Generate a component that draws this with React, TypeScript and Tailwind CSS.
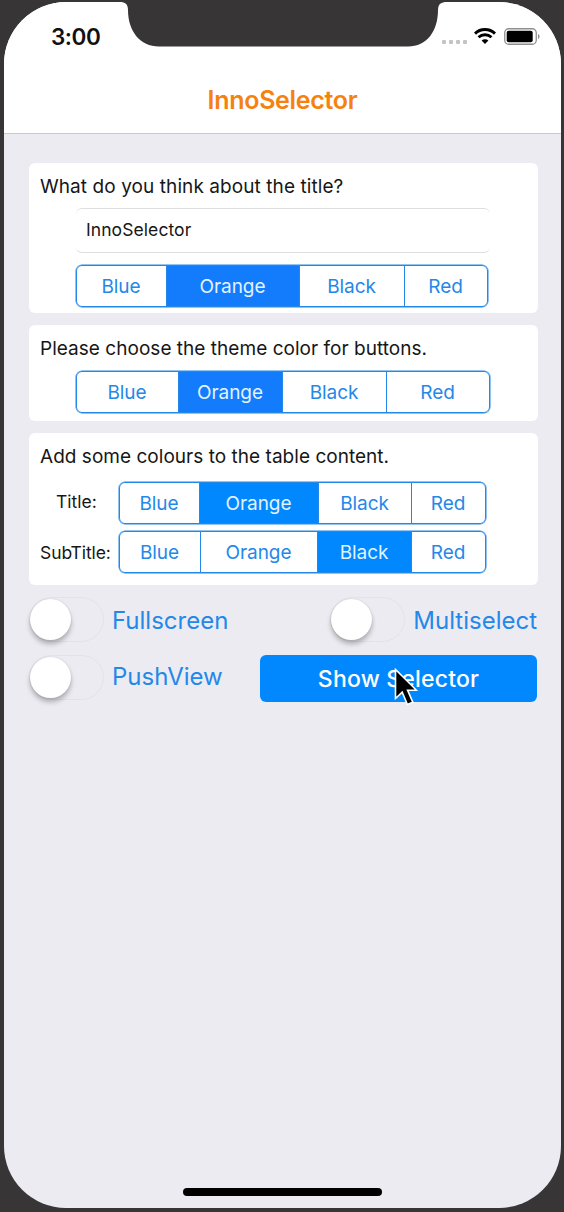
import { clsx } from "clsx";

type Segment = { label: string; width: string; selected?: boolean };

function SegmentedControl({ segments, fill, className }: { segments: Segment[]; fill: string; className: string }) {
  return (
    <div className={clsx("flex overflow-hidden rounded-[6px] border border-[#2488e8] shadow-[0_0_0_0.5px_#2488e8]", className)}>
      {segments.map((s, i) => (
        <button
          key={s.label}
          className={clsx(
            "flex h-full shrink-0 items-center justify-center pt-px pr-px text-[19px] leading-none tracking-[-0.05px]",
            s.width,
            i > 0 && "border-l border-[#2488e8]",
            s.selected ? clsx(fill, "text-[#e2f3ff]") : "text-[#2488e8]",
          )}
        >
          {s.label}
        </button>
      ))}
    </div>
  );
}

function Toggle() {
  return (
    <button className="flex h-[45px] w-[75px] shrink-0 items-start rounded-full border border-[#e3e3e7] pt-px">
      <span className="size-[41px] rounded-full bg-white shadow-[0_4px_5px_rgba(0,0,0,0.26),0_0_2px_rgba(0,0,0,0.12)]" />
    </button>
  );
}

function StatusBar() {
  return (
    <div className="flex h-[72px] items-start justify-between pt-[22px] pr-[21px] pl-[47px]">
      <span className="text-[22.5px] leading-[26px] font-semibold tracking-[-0.45px] text-[#111]">3:00</span>
      <div className="flex h-[24px] items-center">
        <div className="mt-[12px] mr-[7px] flex gap-[2.5px]">
          <i className="size-[4.5px] rounded-[1px] bg-[#c4c4c4]" />
          <i className="size-[4.5px] rounded-[1px] bg-[#c4c4c4]" />
          <i className="size-[4.5px] rounded-[1px] bg-[#c4c4c4]" />
          <i className="size-[4.5px] rounded-[1px] bg-[#c4c4c4]" />
        </div>
        <svg className="h-[16px] w-[22px]" viewBox="0 0 22 16" fill="none">
          <path d="M1 5.600C6.500.2 15.500.2 21 5.600" stroke="#000" strokeWidth="3" />
          <path d="M4.500 9.300C8.200 5.900 13.800 5.900 17.500 9.300" stroke="#000" strokeWidth="2.800" />
          <path d="M11 15.900L7.600 12.500C9.500 10.900 12.500 10.900 14.400 12.500Z" fill="#000" />
        </svg>
        <svg className="ml-[8px] h-[17px] w-[36px]" viewBox="0 0 36 17">
          <rect x=".75" y=".75" width="31.500" height="15.500" rx="4" fill="white" stroke="#8e8e8e" strokeWidth="1.300" />
          <rect x="2.700" y="2.700" width="26" height="11.600" rx="2" fill="#000" />
          <path d="M34 6c2 .7 2 4.300 0 5Z" fill="#8e8e8e" />
        </svg>
      </div>
    </div>
  );
}

const heading = "h-[24px] pl-[11px] text-[19px] leading-[24px] whitespace-nowrap text-[#161616]";

export default function App() {
  return (
    <div className="relative h-[1212px] w-[564px] overflow-hidden bg-[#373535] pt-[2px] pl-[4px] font-['Inter',sans-serif]">
      <div className="flex h-[1206px] w-[557px] flex-col overflow-hidden rounded-[62px] bg-[#ecebf2]">
        <header className="h-[132px] shrink-0 border-b border-[#c9c9cc] bg-white">
          <StatusBar />
          <h1 className="pt-[10px] text-center text-[25px] leading-[32px] font-semibold tracking-[-0.3px] text-[#f5820f]">
            InnoSelector
          </h1>
        </header>

        <main className="flex flex-1 flex-col pt-[29px] pr-[24px] pl-[25px]">
          <section className="h-[150px] w-[509px] rounded-[6px] bg-white pt-[12px]">
            <h2 className={clsx(heading, "tracking-[0.08px]")}>What do you think about the title?</h2>
            <input
              readOnly
              value="InnoSelector"
              className="mt-[9px] ml-[47px] block h-[45px] w-[414px] rounded-[6px] border-y border-[#dedede] px-[10px] pb-[3px] text-[17.5px] tracking-[0.08px] text-[#161616] outline-none"
            />
            <SegmentedControl
              className="mt-[12px] ml-[47px] h-[42px] w-[412px]"
              fill="bg-[#127cfd]"
              segments={[
                { label: "Blue", width: "w-[89px]" },
                { label: "Orange", width: "w-[133px]", selected: true },
                { label: "Black", width: "w-[105px]" },
                { label: "Red", width: "w-[83px]" },
              ]}
            />
          </section>

          <section className="mt-[12px] h-[96px] w-[509px] rounded-[6px] bg-white pt-[12px]">
            <h2 className={clsx(heading, "tracking-[0.03px]")}>Please choose the theme color for buttons.</h2>
            <SegmentedControl
              className="mt-[10px] ml-[47px] h-[42px] w-[414px]"
              fill="bg-[#127cfd]"
              segments={[
                { label: "Blue", width: "w-[101px]" },
                { label: "Orange", width: "w-[104px]", selected: true },
                { label: "Black", width: "w-[104px]" },
                { label: "Red", width: "w-[103px]" },
              ]}
            />
          </section>

          <section className="mt-[12px] h-[152px] w-[509px] rounded-[6px] bg-white pt-[12px]">
            <h2 className={clsx(heading, "tracking-[0.03px]")}>Add some colours to the table content.</h2>
            <div className="mt-[13px] flex">
              <span className="w-[90px] pt-[9px] pl-[27px] text-[17.5px] leading-[22px] text-[#161616]">Title:</span>
              <SegmentedControl
                className="h-[42px] w-[367px]"
                fill="bg-[#0288fe]"
                segments={[
                  { label: "Blue", width: "w-[79px]" },
                  { label: "Orange", width: "w-[119px]", selected: true },
                  { label: "Black", width: "w-[93px]" },
                  { label: "Red", width: "w-[74px]" },
                ]}
              />
            </div>
            <div className="mt-[7px] flex">
              <span className="w-[90px] pt-[11px] pl-[11px] text-[17.500px] leading-[22px] tracking-[-0.1px] whitespace-nowrap text-[#161616]">SubTitle:</span>
              <SegmentedControl
                className="h-[42px] w-[367px]"
                fill="bg-[#0288fe]"
                segments={[
                  { label: "Blue", width: "w-[80px]" },
                  { label: "Orange", width: "w-[117px]" },
                  { label: "Black", width: "w-[94px]", selected: true },
                  { label: "Red", width: "w-[74px]" },
                ]}
              />
            </div>
          </section>

          <div className="mt-[12px] flex h-[45px] items-center justify-between text-[24px] text-[#2488e8]">
            <div className="flex items-center gap-[8px]">
              <Toggle />
              <span className="pt-[2px]">Fullscreen</span>
            </div>
            <div className="flex items-center gap-[8px]">
              <Toggle />
              <span className="pt-[2px]">Multiselect</span>
            </div>
          </div>

          <div className="mt-[13px] flex h-[47px] justify-between text-[24px] text-[#2488e8]">
            <div className="flex items-start gap-[8px]">
              <Toggle />
              <span className="leading-[43px]">PushView</span>
            </div>
            <button className="h-[47px] w-[277px] rounded-[6px] bg-[#0288fe] pt-px text-[23px] font-medium tracking-[0.2px] text-white">
              Show Selector
            </button>
          </div>
        </main>

        <div className="mb-[12px] h-[8px] w-[199px] self-center rounded-full bg-black" />
      </div>

      <svg className="absolute top-0 left-[120px] h-[48px] w-[327px]" viewBox="0 0 327 48">
        <path d="M0 0V2C5 2 8 4 8 10C8 31 20 46.500 39 46.500H288C307 46.500 318 31 318 10C318 4 321 2 327 2V0Z" fill="#373535" />
      </svg>

      <svg className="absolute top-[668px] left-[394px] h-[38px] w-[24px]" viewBox="0 0 24 38">
        <path d="M1.500 1.500V30.500L8.200 24.200L13.400 36.500L18.800 34.200L13.600 22.300H22.500Z" fill="#000" stroke="#fff" strokeWidth="1.600" />
      </svg>
    </div>
  );
}
